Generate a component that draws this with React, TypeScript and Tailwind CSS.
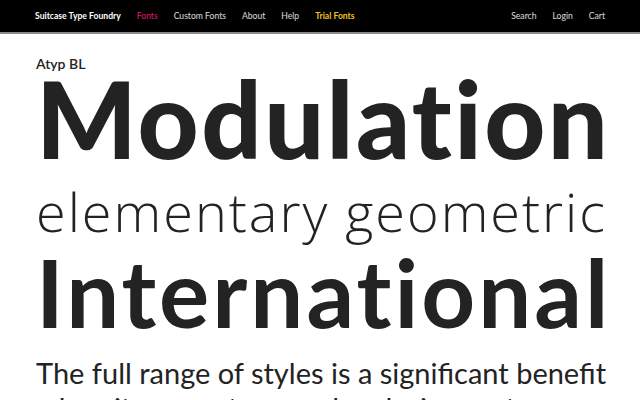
import React from "react";

const navLinks = [
  { label: "Fonts", className: "text-[#e0177b]" },
  { label: "Custom Fonts", className: "text-white/85" },
  { label: "About", className: "text-white/85" },
  { label: "Help", className: "text-white/85" },
  { label: "Trial Fonts", className: "font-bold text-[#f2c21b]" },
];

export default function App() {
  return (
    <div className="h-[400px] w-[640px] overflow-hidden bg-white font-['Lato',sans-serif] text-[#232323]">
      <header className="flex h-[34px] items-center justify-between border-b-2 border-[#8a8a8a] bg-black px-[35px] text-[8.6px]">
        <nav className="flex items-center gap-4">
          <span className="font-bold text-white">Suitcase Type Foundry</span>
          {navLinks.map((link) => (
            <span key={link.label} className={link.className}>
              {link.label}
            </span>
          ))}
        </nav>
        <div className="flex items-center gap-4 text-white/85">
          <span>Search</span>
          <span>Login</span>
          <span>Cart</span>
        </div>
      </header>

      <main className="px-[36px] pt-[23px]">
        <p className="text-[14px] font-semibold leading-none">Atyp BL</p>
        <h1 className="mt-[5px] whitespace-nowrap text-[106px] font-black leading-[84px] tracking-[2.4px]">
          Modulation
        </h1>
        <h2 className="mt-[24px] whitespace-nowrap font-['Open_Sans',sans-serif] text-[54px] font-light leading-[54px] tracking-[2px]">
          elementary geometric
        </h2>
        <h2 className="mt-[7px] whitespace-nowrap text-[94px] font-bold leading-[1] tracking-[3px]">
          International
        </h2>
        <p className="mt-[16px] text-[29px] leading-[35px]">
          <span className="block whitespace-nowrap">The full range of styles is a significant benefit</span>
          <span className="block whitespace-nowrap">when it comes to complex design systems.</span>
        </p>
      </main>
    </div>
  );
}
